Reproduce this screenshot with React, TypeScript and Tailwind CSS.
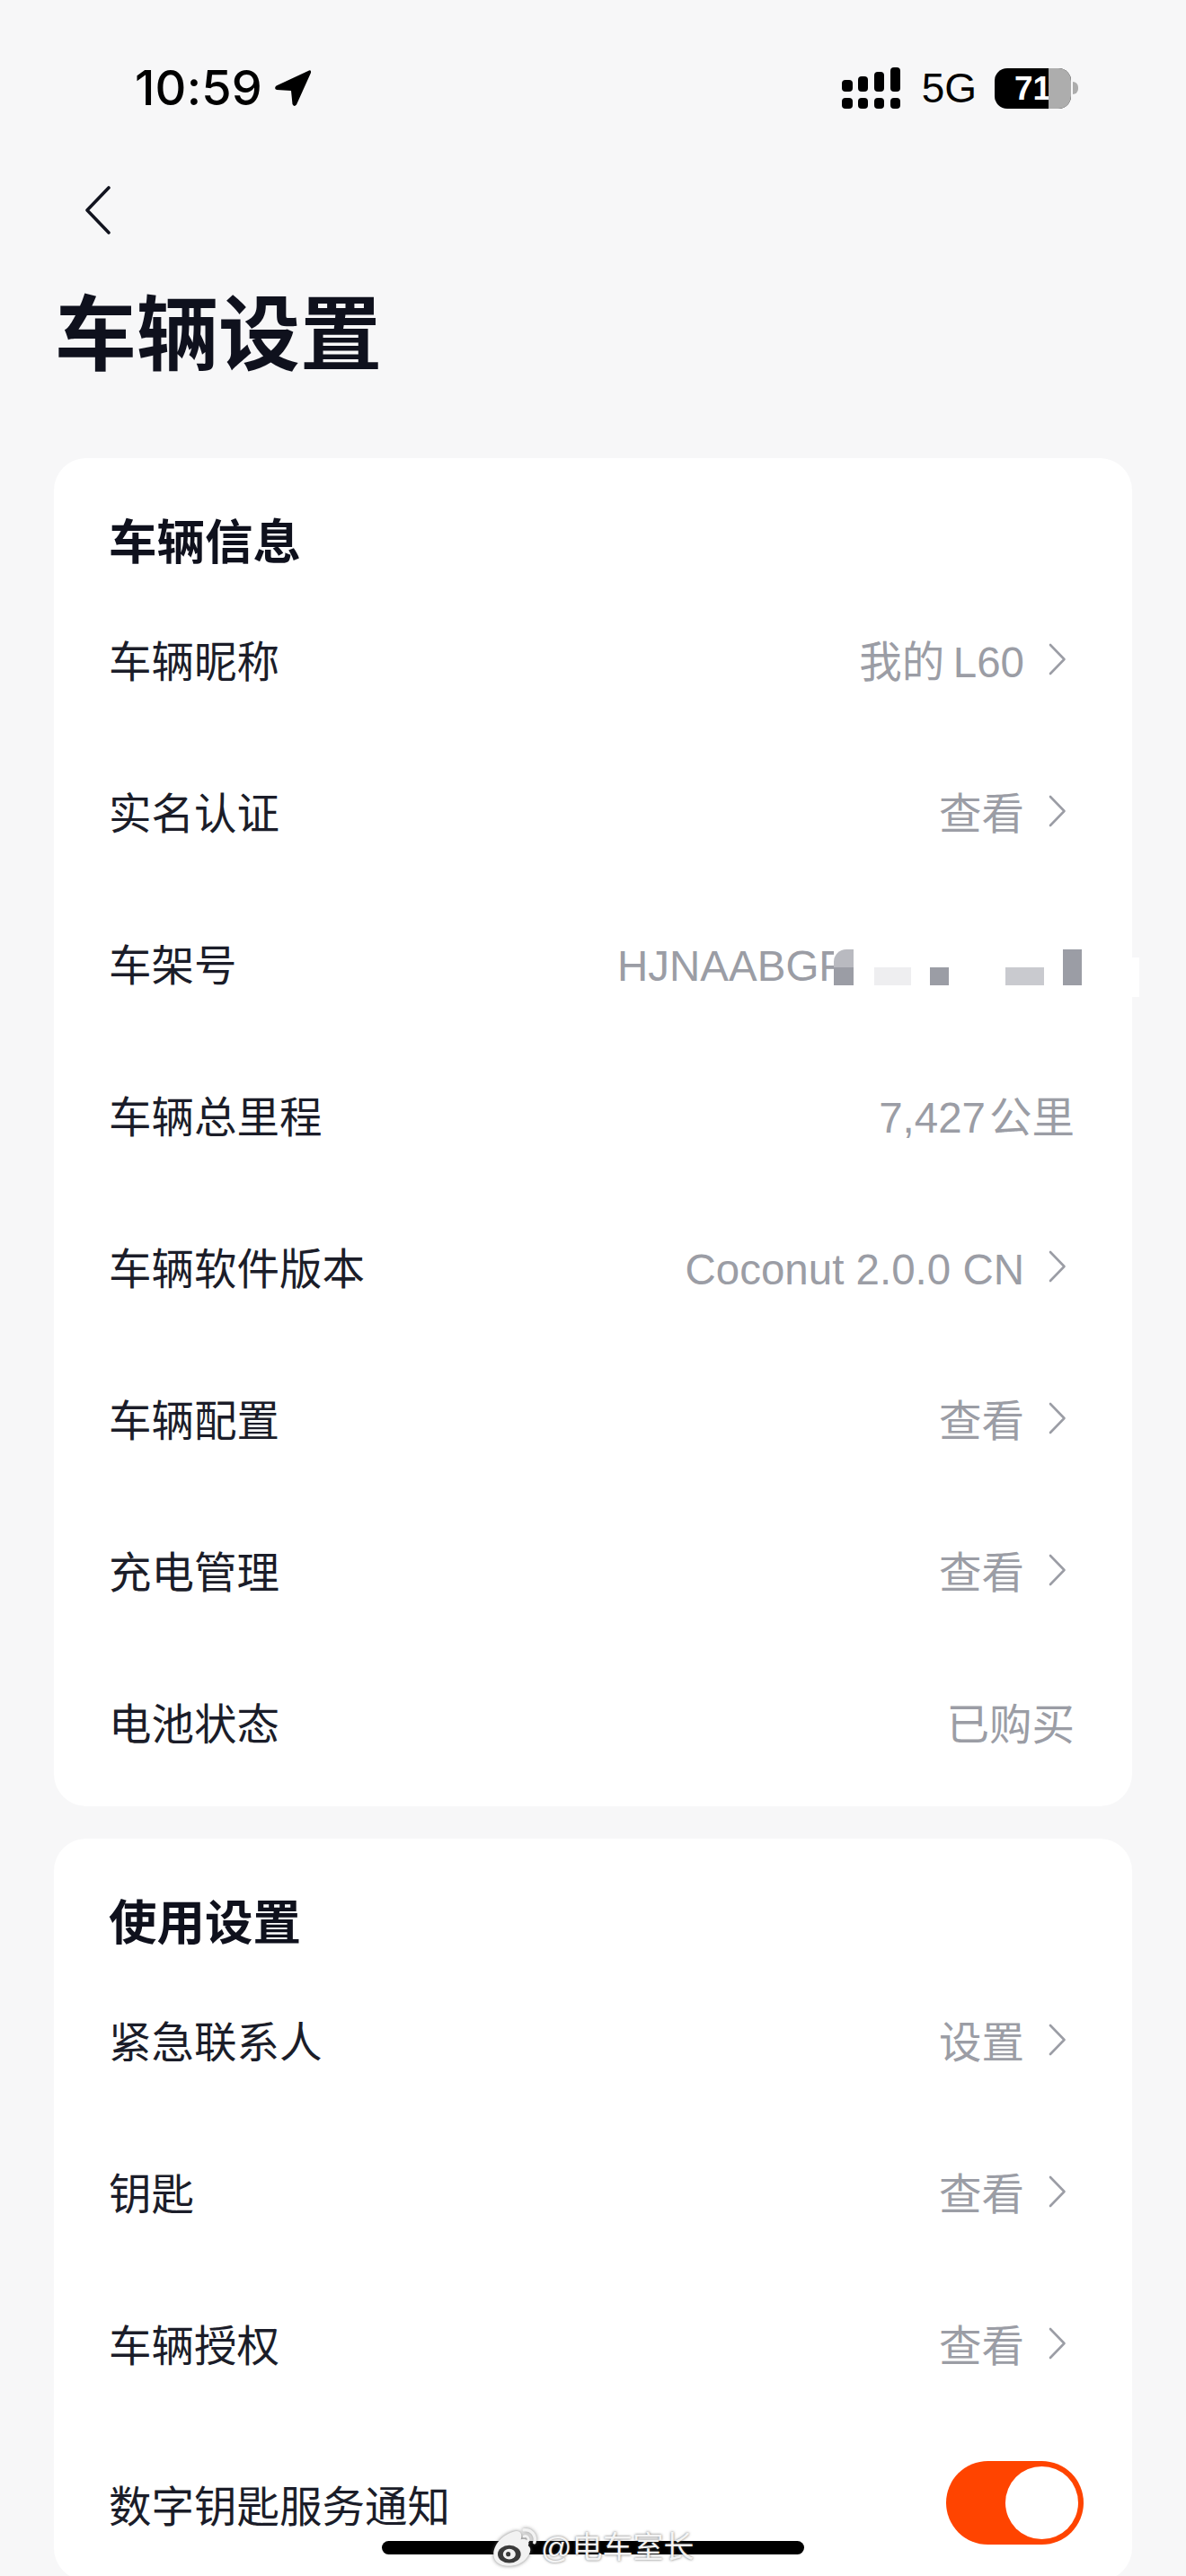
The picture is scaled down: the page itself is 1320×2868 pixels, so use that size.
import React from "react";

const fontStack = `font-['Liberation_Sans','Noto_Sans_CJK_SC',sans-serif]`;

type Row = { label: string; value?: string; arrow?: boolean };

const vehicleInfo: Row[] = [
  { label: "车辆昵称", value: "我的\u2009L60", arrow: true },
  { label: "实名认证", value: "查看", arrow: true },
  { label: "车架号" },
  { label: "车辆总里程", value: "7,427\u200a公里" },
  { label: "车辆软件版本", value: "Coconut 2.0.0 CN", arrow: true },
  { label: "车辆配置", value: "查看", arrow: true },
  { label: "充电管理", value: "查看", arrow: true },
  { label: "电池状态", value: "已购买" },
];

const usage: Row[] = [
  { label: "紧急联系人", value: "设置", arrow: true },
  { label: "钥匙", value: "查看", arrow: true },
  { label: "车辆授权", value: "查看", arrow: true },
];

function Chevron() {
  return (
    <svg width="20" height="36" viewBox="0 0 20 36" fill="none" className="ml-[27px] mr-[9px] -mt-[8px] shrink-0">
      <path d="M2 2 L17.5 18 L2 34" stroke="#9b9da5" strokeWidth="2.6" strokeLinecap="round" strokeLinejoin="round" />
    </svg>
  );
}

// VIN with the tail pixelated out
function VinValue() {
  return (
    <div className="flex items-center">
      <span className="w-[241px] whitespace-nowrap">HJNAABGF</span>
      <div className="relative flex items-end h-[40px] mt-[2px]">
        <div className="flex flex-col w-[22px] h-[40px] bg-white">
          <div className="h-[20px] bg-[#b9bac0] rounded-tl-[14px]" />
          <div className="h-[20px] bg-[#9b9da5]" />
        </div>
        <div className="ml-[23px] w-[41px] h-[20px] bg-[#eeeef0]" />
        <div className="ml-[21px] w-[21px] h-[20px] bg-[#9b9da5]" />
        <div className="ml-[63px] w-[43px] h-[20px] bg-[#c9cacf]" />
        <div className="ml-[21px] w-[21px] h-[40px] bg-[#9b9da5]" />
      </div>
    </div>
  );
}

function SettingRow({ row }: { row: Row }) {
  return (
    <div className="h-[169px] pt-[3px] flex items-center justify-between">
      <span className="text-[47.5px] leading-none text-[#1b1d29]">{row.label}</span>
      {row.value && (
        <div className="flex items-center text-[47.5px] leading-none text-[#9b9da5]">
          <span>{row.value}</span>
          {row.arrow && <Chevron />}
        </div>
      )}
    </div>
  );
}

function Card({ title, children, className }: { title: string; children: React.ReactNode; className?: string }) {
  return (
    <section className={`bg-white rounded-[36px] mx-[60px] pl-[61px] pr-[64px] ${className ?? ""}`}>
      <h2 className="h-[142px] pt-[62px] text-[53.5px] leading-[66px] font-bold text-[#0f111d]">{title}</h2>
      {children}
    </section>
  );
}

function SignalBars() {
  return (
    <svg width="65" height="46" viewBox="0 0 65 46" fill="#000">
      <rect x="0" y="14" width="12" height="13" rx="4" />
      <rect x="18" y="10" width="11" height="17" rx="4" />
      <rect x="36" y="5" width="11" height="22" rx="4" />
      <rect x="54" y="0" width="11" height="27" rx="4" />
      <rect x="0" y="34" width="12" height="12" rx="4" />
      <rect x="18" y="34" width="11" height="12" rx="4" />
      <rect x="36" y="34" width="11" height="12" rx="4" />
      <rect x="54" y="34" width="11" height="12" rx="4" />
    </svg>
  );
}

function Battery() {
  return (
    <div className="flex items-center ml-[20px]">
      <div className="relative w-[85px] h-[45px] rounded-[14px] overflow-hidden bg-black flex items-center pl-[22px]">
        <span className="text-[37px] leading-none font-bold text-white">71</span>
        <div className="absolute right-0 top-0 w-[25px] h-full bg-[#adadad]" />
      </div>
      <div className="ml-[2px] w-[6px] h-[14px] rounded-r-full bg-[#adadad]" />
    </div>
  );
}

function StatusBar() {
  return (
    <div className="h-[196px] flex items-center justify-between pl-[150px] pr-[120px] text-black">
      <div className="flex items-center">
        <span className="text-[54px] leading-none font-medium font-['Inter'] tracking-[0.2px]">10:59</span>
        <svg width="42" height="42" viewBox="0 0 42 42" className="ml-[13px]" fill="#000">
          <path d="M39 1.5 L2.5 18.5 Q-0.5 21.5 3 23 L19 24 L20.5 39 Q22.5 42.5 25 39.5 L41 4 Q41.5 0.5 39 1.5 Z" />
        </svg>
      </div>
      <div className="flex items-center">
        <SignalBars />
        <span className="ml-[24px] text-[46px] leading-none">5G</span>
        <Battery />
      </div>
    </div>
  );
}

function WeiboMark() {
  return (
    <svg width="56" height="49" viewBox="0 0 48 42" fill="none" className="drop-shadow-[0_0_2px_rgba(90,90,90,0.8)]">
      <path d="M2 28 C2 17 14 7 24 6 C29 6 29 11 28 14 C33 13 37 15 35 20 C38 22 38 26 34 31 C29 38 20 40 13 39 C6 38 2 34 2 28 Z" fill="#f2f2f2" />
      <ellipse cx="17" cy="28" rx="11" ry="8.5" fill="#3a3a3a" />
      <ellipse cx="17" cy="28" rx="6" ry="5" fill="#f2f2f2" />
      <circle cx="16" cy="28" r="2.2" fill="#3a3a3a" />
      <path d="M31 5 C38 4 43 10 41 17" stroke="#f2f2f2" strokeWidth="3" strokeLinecap="round" />
      <path d="M31 11 C34 10 36 13 35 15" stroke="#f2f2f2" strokeWidth="2.5" strokeLinecap="round" />
    </svg>
  );
}

export default function App() {
  return (
    <div className={`relative h-[2868px] w-[1320px] overflow-hidden bg-[#f7f7f8] ${fontStack}`}>
      <StatusBar />

      {/* Back button */}
      <div className="h-[76px] flex items-center pl-[94px]">
        <svg width="30" height="54" viewBox="0 0 30 54" fill="none">
          <path d="M27 2 L3 27 L27 52" stroke="#12141f" strokeWidth="3.6" strokeLinecap="round" strokeLinejoin="round" />
        </svg>
      </div>

      <h1 className="h-[198px] mb-[40px] pt-[4px] pl-[61px] flex items-center text-[91px] leading-none font-bold text-[#0f111d]">
        车辆设置
      </h1>

      <Card title="车辆信息" className="h-[1501px]">
        {vehicleInfo.map((row) =>
          row.label === "车架号" ? (
            <div key={row.label} className="h-[169px] pt-[3px] flex items-center justify-between">
              <span className="text-[47.5px] leading-none text-[#1b1d29]">{row.label}</span>
              <div className="text-[47.5px] leading-none text-[#9b9da5] -mr-[8px]">
                <VinValue />
              </div>
            </div>
          ) : (
            <SettingRow key={row.label} row={row} />
          )
        )}
      </Card>

      <Card title="使用设置" className="mt-[36px]">
        {usage.map((row) => (
          <SettingRow key={row.label} row={row} />
        ))}
        <div className="h-[169px] mt-[8px] flex items-center justify-between">
          <span className="pt-[6px] text-[47.5px] leading-none text-[#1b1d29]">数字钥匙服务通知</span>
          <div className="w-[153px] h-[93px] -mr-[10px] -mt-[4px] rounded-full bg-[#ff4400] flex items-center justify-end pr-[6px]">
            <div className="w-[81px] h-[81px] rounded-full bg-white" />
          </div>
        </div>
      </Card>

      {/* Home indicator */}
      <div className="absolute left-[425px] top-[2829px] w-[470px] h-[15px] rounded-full bg-black" />

      {/* Stray bright patch from the pixelated VIN */}
      <div className="absolute left-[1260px] top-[1066px] w-[8px] h-[44px] bg-white" />

      {/* Repost watermark */}
      <div className="absolute left-[547px] top-[2811px] flex items-center">
        <WeiboMark />
        <span className="ml-[-1px] text-[34px] leading-[42px] text-[#f4f4f4] [text-shadow:0_0_3px_rgba(80,80,80,0.9)]">
          @电车室长
        </span>
      </div>
    </div>
  );
}
